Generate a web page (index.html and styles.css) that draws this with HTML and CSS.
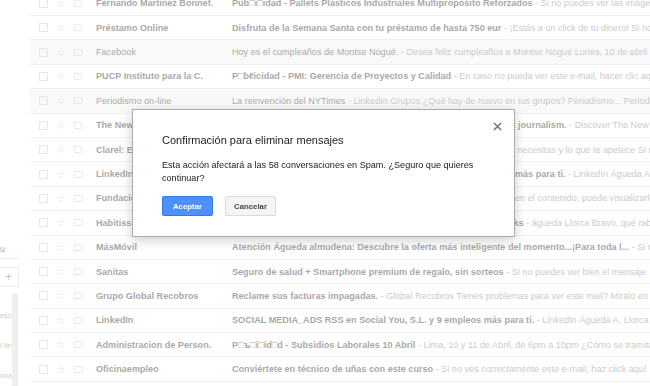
FILE: index.html
```html
<!DOCTYPE html>
<html lang="es">
  <head>
    <meta charset="utf-8" />
    <title>Spam - Gmail</title>
    <meta name="viewport" content="width=device-width, initial-scale=1" />
    <link rel="stylesheet" href="styles.css">
  </head>
  <body>
    <div class="app">
      <aside class="side">
        <div class="side-inner">
          <div class="side-me">Tu</div>
          <div class="side-search"><span class="plus">+</span></div>
          <div class="side-chats">
            <ul class="chat-list">
              <li>Todo en proceso</li>
              <li>Nos vemos al fin</li>
              <li>Mañana a una</li>
            </ul>
            <div class="chat-bar"></div>
          </div>
        </div>
      </aside>

      <main class="list">
        <div class="row unread">
          <span class="check"></span><span class="star">☆</span><span class="mark"></span>
          <span class="from">Fernando Martinez Bonnef.</span>
          <span class="text"><span class="subj">Pub□i□idad - Pallets Plásticos Industriales Multipropósito Reforzados</span><span class="snip"> - Si no puedes ver las imágenes de este correo</span></span>
        </div>
        <div class="row unread">
          <span class="check"></span><span class="star">☆</span><span class="mark"></span>
          <span class="from">Préstamo Online</span>
          <span class="text"><span class="subj">Disfruta de la Semana Santa con tu préstamo de hasta 750 eur</span><span class="snip"> - ¡Estás a un click de tu dinero! Si no</span></span>
        </div>
        <div class="row read">
          <span class="check"></span><span class="star">☆</span><span class="mark"></span>
          <span class="from">Facebook</span>
          <span class="text"><span class="subj">Hoy es el cumpleaños de Montse Nogué.</span><span class="snip"> - Desea feliz cumpleaños a Montse Nogué Lunes, 10 de abril</span></span>
        </div>
        <div class="row unread">
          <span class="check"></span><span class="star">☆</span><span class="mark"></span>
          <span class="from">PUCP Instituto para la C.</span>
          <span class="text"><span class="subj">P□bℓicidad - PMI: Gerencia de Proyectos y Calidad</span><span class="snip"> - En caso no pueda ver este e-mail, hacer clic aquí</span></span>
        </div>
        <div class="row read">
          <span class="check"></span><span class="star">☆</span><span class="mark"></span>
          <span class="from">Periodismo on-line</span>
          <span class="text"><span class="subj">La reinvención del NYTimes</span><span class="snip"> - LinkedIn Grupos ¿Qué hay de nuevo en tus grupos? Periodismo... Periodismo</span></span>
        </div>
        <div class="row unread">
          <span class="check"></span><span class="star">☆</span><span class="mark"></span>
          <span class="from">The New York Times</span>
          <span class="text"><span class="subj">Get unlimited digital access for just 99¢ a week and support great journalism.</span><span class="snip"> - Discover The New York Times</span></span>
        </div>
        <div class="row unread">
          <span class="check"></span><span class="star">☆</span><span class="mark"></span>
          <span class="from">Clarel: Especial Pascua</span>
          <span class="text"><span class="subj">Ofertas de Semana Santa en tu tienda</span><span class="snip"> - En Clarel tienes todo lo que necesitas y lo que te apetece Si no</span></span>
        </div>
        <div class="row unread">
          <span class="check"></span><span class="star">☆</span><span class="mark"></span>
          <span class="from">LinkedIn</span>
          <span class="text"><span class="subj">Community Managers Junior en el Centro de Madrid y 9 empleos más para ti.</span><span class="snip"> - LinkedIn Águeda A. Llorca</span></span>
        </div>
        <div class="row unread">
          <span class="check"></span><span class="star">☆</span><span class="mark"></span>
          <span class="from">Fundación Tripartita</span>
          <span class="text"><span class="subj">Formación gratuita para empleados</span><span class="snip"> - Si tiene problemas para ver bien el contenido, puede visualizarlo</span></span>
        </div>
        <div class="row unread">
          <span class="check"></span><span class="star">☆</span><span class="mark"></span>
          <span class="from">Habitissimo</span>
          <span class="text"><span class="subj">Ideas para renovar tu cocina y tu salón: los 10 mejores tips &amp; tricks</span><span class="snip"> - águeda Llorca Bravo, qué rabia</span></span>
        </div>
        <div class="row unread">
          <span class="check"></span><span class="star">☆</span><span class="mark"></span>
          <span class="from">MásMóvil</span>
          <span class="text"><span class="subj">Atención Águeda almudena: Descubre la oferta más inteligente del momento...¡Para toda l...</span><span class="snip"> - Si no</span></span>
        </div>
        <div class="row unread">
          <span class="check"></span><span class="star">☆</span><span class="mark"></span>
          <span class="from">Sanitas</span>
          <span class="text"><span class="subj">Seguro de salud + Smartphone premium de regalo, sin sorteos</span><span class="snip"> - Si no puedes ver bien el mensaje</span></span>
        </div>
        <div class="row unread">
          <span class="check"></span><span class="star">☆</span><span class="mark"></span>
          <span class="from">Grupo Global Recobros</span>
          <span class="text"><span class="subj">Reclame sus facturas impagadas.</span><span class="snip"> - Global Recobros Tienes problemas para ver este mail? Miralo en</span></span>
        </div>
        <div class="row unread">
          <span class="check"></span><span class="star">☆</span><span class="mark"></span>
          <span class="from">LinkedIn</span>
          <span class="text"><span class="subj">SOCIAL MEDIA_ADS RSS en Social You, S.L. y 9 empleos más para ti.</span><span class="snip"> - LinkedIn Águeda A. Llorca</span></span>
        </div>
        <div class="row unread">
          <span class="check"></span><span class="star">☆</span><span class="mark"></span>
          <span class="from">Administracion de Person.</span>
          <span class="text"><span class="subj">P□ъ□i□id□d - Subsidios Laborales 10 Abril</span><span class="snip"> - Lima, 10 y 11 de Abril, de 6pm a 10pm ¿Cómo se tramita</span></span>
        </div>
        <div class="row unread">
          <span class="check"></span><span class="star">☆</span><span class="mark"></span>
          <span class="from">Oficinaempleo</span>
          <span class="text"><span class="subj">Conviértete en técnico de uñas con este curso</span><span class="snip"> - Si no ves correctamente este e-mail, haz click aquí</span></span>
        </div>
      </main>
    </div>

    <div class="backdrop"></div>

    <div class="dialog" role="dialog">
      <button class="dialog-close" type="button" aria-label="Cerrar">
        <svg width="9" height="9" viewBox="0 0 9 9">
          <path d="M1 1 L8 8 M8 1 L1 8" stroke="#777" stroke-width="1.6" fill="none" />
        </svg>
      </button>
      <h2 class="dialog-title">Confirmación para eliminar mensajes</h2>
      <p class="dialog-body">
        Esta acción afectará a las 58 conversaciones en Spam. ¿Seguro que quieres continuar?
      </p>
      <div class="dialog-buttons">
        <button class="btn btn-primary" type="button">Aceptar</button>
        <button class="btn" type="button">Cancelar</button>
      </div>
    </div>
  </body>
</html>
```

FILE: styles.css
```css
html,
body {
  margin: 0;
  height: 100%;
  overflow: hidden;
}
body {
  font-family: "Liberation Sans", Arial, Helvetica, sans-serif;
  color: #222;
  background: #fff;
}
.app {
  display: flex;
  height: 100%;
}

/* left column, only its right edge is on screen */
.side {
  flex: none;
  width: 30px;
  overflow: hidden;
}
.side-inner {
  width: 169px;
  margin-left: -150px;
  padding-top: 240px;
}
.side-me {
  height: 19px;
  box-sizing: border-box;
  border-bottom: 1px solid #d4d4d4;
  text-align: right;
  padding-right: 14px;
  font-size: 9px;
  line-height: 18px;
  white-space: nowrap;
}
.side-search {
  margin-top: 8px;
  height: 20px;
  box-sizing: border-box;
  border: 1px solid #d0d0d0;
  display: flex;
  justify-content: flex-end;
  align-items: center;
  padding-right: 6px;
}
.plus {
  font-size: 12px;
  line-height: 1;
  color: #777;
}
.side-chats {
  margin-top: 6px;
  display: flex;
  height: 200px;
}
.chat-list {
  flex: 1;
  list-style: none;
  margin: 0;
  padding: 8px 0 0;
  text-align: right;
  font-size: 7.5px;
  line-height: 30px;
  color: #777;
  white-space: nowrap;
}
.chat-bar {
  width: 6px;
  margin-right: 1px;
  background: #d8d8d8;
}

/* message list */
.list {
  flex: 1;
  min-width: 0;
  margin-top: -8.4px;
}
.row {
  display: flex;
  align-items: center;
  height: 24.4px;
  box-sizing: border-box;
  border-bottom: 1px solid #dcdcdc;
  padding-left: 9px;
  font-size: 9.1px;
  white-space: nowrap;
  overflow: hidden;
}
.row.read {
  background: #f0f0f0;
}
.check {
  flex: none;
  width: 9px;
  height: 9px;
  box-sizing: border-box;
  border: 1px solid #c2c2c2;
}
.star {
  flex: none;
  width: 10px;
  margin-left: 8px;
  font-family: "DejaVu Sans", sans-serif;
  font-size: 11px;
  line-height: 1;
  color: #b8b8b8;
  text-align: center;
}
.mark {
  flex: none;
  width: 9px;
  height: 7px;
  margin-left: 8px;
  box-sizing: border-box;
  border: 1px solid #c8c8c8;
  border-radius: 1px 4px 4px 1px;
}
.from {
  flex: none;
  width: 136px;
  margin-left: 13px;
  overflow: hidden;
}
.text {
  flex: none;
}
.unread .from,
.unread .subj {
  font-weight: bold;
}
.snip {
  color: #777;
}

/* modal */
.backdrop {
  position: fixed;
  inset: 0;
  background: rgba(255, 255, 255, 0.6);
}
.dialog {
  position: fixed;
  left: 132px;
  top: 109px;
  width: 383px;
  box-sizing: border-box;
  padding: 23px 29px 20px;
  background: #fff;
  border: 1px solid #acacac;
  box-shadow: 0 3px 11px rgba(0, 0, 0, 0.2);
}
.dialog-close {
  position: absolute;
  top: 12px;
  right: 12px;
  padding: 0;
  border: 0;
  background: none;
  width: 9px;
  height: 9px;
  display: flex;
}
.dialog-title {
  margin: 0;
  font-size: 11px;
  font-weight: normal;
  line-height: 14px;
}
.dialog-body {
  margin: 12px 0 0;
  font-size: 9.1px;
  line-height: 13.4px;
}
.dialog-buttons {
  display: flex;
  gap: 12px;
  margin-top: 10.6px;
}
.btn {
  width: 51px;
  height: 20px;
  padding: 0;
  box-sizing: border-box;
  font-family: inherit;
  font-size: 7.8px;
  font-weight: bold;
  color: #444;
  background: #f5f5f5;
  border: 1px solid #dcdcdc;
  border-radius: 2px;
}
.btn-primary {
  color: #fff;
  background: #4d90fe;
  border-color: #3079ed;
}
```
